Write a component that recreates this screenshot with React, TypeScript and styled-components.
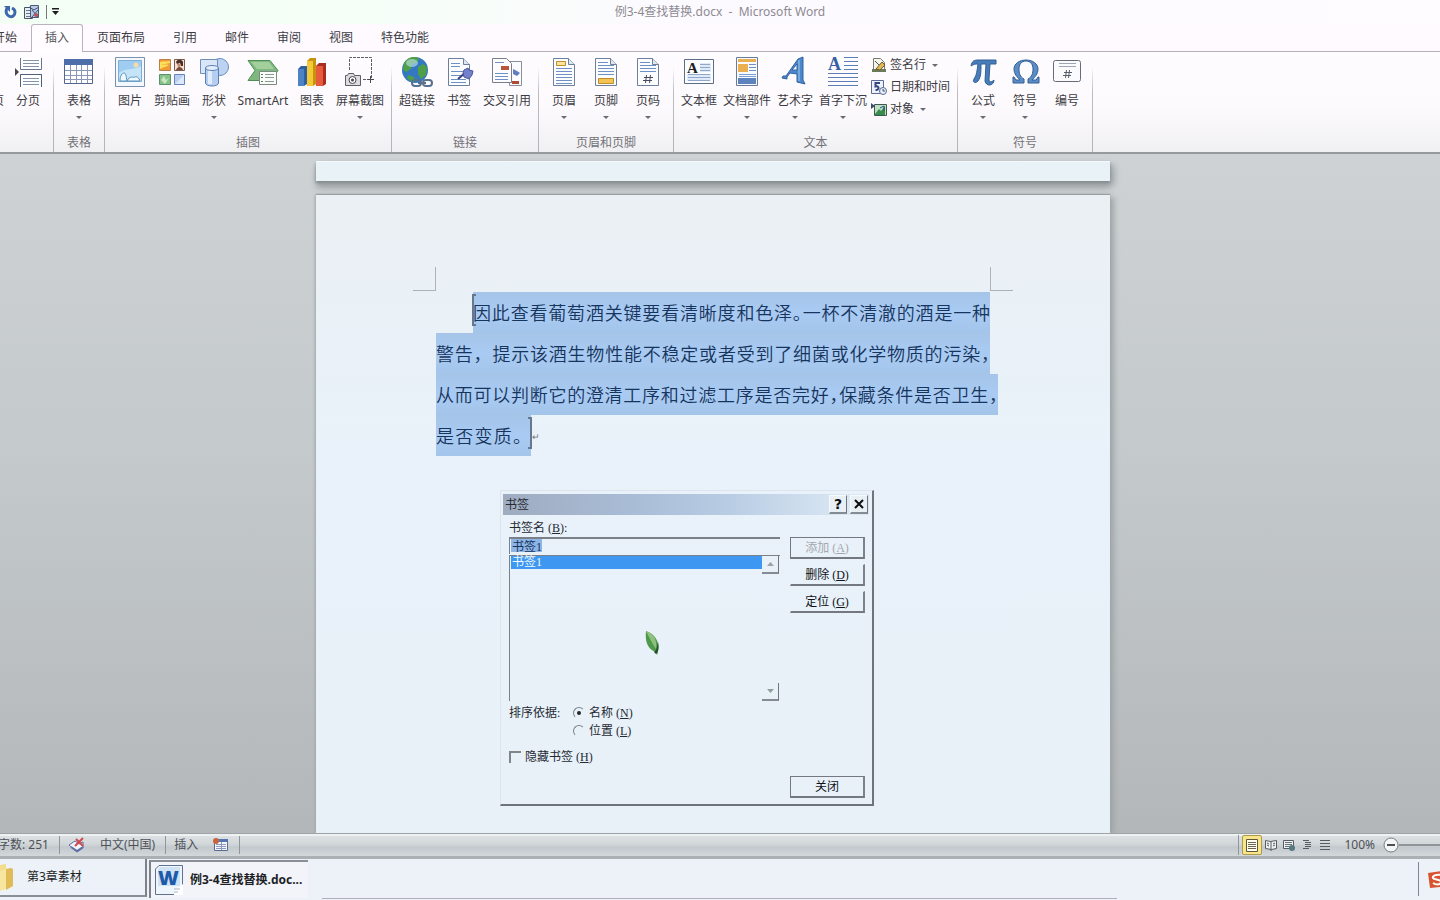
import React from "react";
import styled, { createGlobalStyle, css } from "styled-components";

const uiFont = `"Noto Sans", "Noto Sans CJK SC", sans-serif`;
const dialogFont = `"Liberation Serif", "Noto Sans CJK SC", serif`;

const GlobalStyle = createGlobalStyle`
  *, *::before, *::after { box-sizing: border-box; }
  body { margin: 0; background: #b4b8ba; }
  button, input { font: inherit; color: inherit; }
  button { border: 0; padding: 0; background: none; cursor: default; }
  svg { display: block; flex: none; }
`;

const Window = styled.div`
  display: flex;
  flex-direction: column;
  min-height: 100vh;
  overflow: hidden;
  font-family: ${uiFont};
  font-size: 12px;
  line-height: 16px;
  color: #3c3c44;
`;

/* ---------- title bar ---------- */

const TitleBar = styled.header`
  display: grid;
  grid-template-columns: 1fr auto 1fr;
  align-items: center;
  height: 24px;
  padding: 0 4px;
  background: linear-gradient(90deg, #f3fff5 0, #f4fff6 20%, #fdfaff 50%, #fefcff 100%);
`;

const QuickAccess = styled.div`
  display: flex;
  align-items: center;
  gap: 5px;
`;

const IconButton = styled.button`
  display: flex;
  align-items: center;
  justify-content: center;
`;

const QuickDivider = styled.span`
  width: 1px;
  height: 14px;
  background: #77777c;
`;

const Title = styled.h1`
  margin: 0;
  font-size: 12px;
  font-weight: 400;
  color: #8d8a92;
  white-space: pre;
`;

/* ---------- tabs ---------- */

const TabStrip = styled.nav`
  display: flex;
  height: 28px;
  margin-left: -21px;
  background: #fefaff;
  border-bottom: 1px solid #b5b0b8;
`;

const Tab = styled.button<{ $active?: boolean }>`
  height: 28px;
  padding: 0 13px 2px;
  border: 1px solid transparent;
  border-bottom: 0;
  border-radius: 3px 3px 0 0;
  white-space: nowrap;
  ${(p) =>
    p.$active &&
    css`
      border-color: #b9b3bb;
      background: #fffdff;
      color: #55555c;
    `}
`;

/* ---------- ribbon ---------- */

const Ribbon = styled.div`
  display: flex;
  height: 102px;
  margin-left: -39px;
  background: linear-gradient(#fffcff 0, #fdfafd 55%, #f0f0f2 100%);
  border-bottom: 2px solid #96999d;
`;

const Group = styled.section`
  display: flex;
  flex-direction: column;
  flex: none;
  padding: 4px 4px 0;
  border-right: 1px solid;
  border-image: linear-gradient(transparent 15%, #bdbcc1 40%, #b4b4b8) 1;
`;

const GroupItems = styled.div`
  display: flex;
  flex: 1;
`;

const GroupName = styled.h2`
  margin: 0;
  height: 17px;
  font-size: 12px;
  font-weight: 400;
  text-align: center;
  color: #737278;
`;

const BigButton = styled.button<{ $width: number }>`
  display: flex;
  flex-direction: column;
  align-items: center;
  width: ${(p) => p.$width}px;
  height: 70px;
  white-space: nowrap;
`;

const BigLabel = styled.span`
  margin-top: 5px;
`;

const Caret = styled.span`
  width: 0;
  height: 0;
  margin-top: 7px;
  border: 3px solid transparent;
  border-top-color: #6a6a70;
  border-bottom: 0;
`;

const SmallStack = styled.div`
  display: flex;
  flex-direction: column;
  width: 83px;
  margin-top: -2px;
`;

const SmallButton = styled.button`
  display: flex;
  align-items: center;
  gap: 3px;
  height: 22px;
  padding-left: 1px;
  white-space: nowrap;

  ${Caret} {
    margin: 0 0 0 3px;
  }
`;

/* ---------- document ---------- */

const Workspace = styled.main`
  display: flex;
  flex-direction: column;
  flex: 1;
  align-items: center;
  padding: 7px 14px 0 0;
  background: linear-gradient(#ced2d5, #c4c9cc 45%, #b3b7b9);
`;

const PreviousPage = styled.div`
  width: 794px;
  height: 20px;
  margin-bottom: 14px;
  background: #e9f2f6;
  border-top: 1px solid #f6fafb;
  box-shadow: 0 2px 3px #84898c, 0 7px 6px #a2a7aa, 5px 4px 6px #a7acaf;
`;

const Page = styled.article`
  flex: 1;
  width: 794px;
  padding: 72px 120px 20px;
  background: linear-gradient(#ebf0f4, #e9f2fa 40%, #e8f1f8);
  box-shadow: 0 -1px 1px #9a9fa2, 4px 2px 6px #a0a5a8, -1px 0 3px #a7acaf;
`;

const MarginMarks = styled.div`
  display: flex;
  justify-content: space-between;
  height: 24px;
  margin: 0 -23px;

  &::before,
  &::after {
    content: "";
    width: 23px;
    border-bottom: 1px solid #aeb2b7;
  }
  &::before { border-right: 1px solid #aeb2b7; }
  &::after { border-left: 1px solid #aeb2b7; }
`;

const Paragraph = styled.p`
  margin: 1px 0 0;
  font-family: "Noto Sans CJK SC", sans-serif;
  font-size: 18px;
  font-weight: 350;
  line-height: 41px;
  color: #16345c;
`;

const Line = styled.span<{ $indent?: number; $width: number }>`
  position: relative;
  display: block;
  width: ${(p) => p.$width}px;
  margin-left: ${(p) => p.$indent ?? 0}px;
  background: linear-gradient(#a5c4e8, #a9cbf3 50%, #a4c5ea);
  text-align: justify;
  text-align-last: justify;
  white-space: nowrap;
`;

const HalfMark = styled.span`
  font-feature-settings: "halt";
`;

const Bracket = styled.i<{ $side: "left" | "right" }>`
  position: absolute;
  top: 2px;
  ${(p) => p.$side}: -1px;
  width: 4px;
  height: 32px;
  border: 2px solid #66788f;
  border-${(p) => (p.$side === "left" ? "right" : "left")}: 0;
`;

const ReturnMark = styled.span`
  position: absolute;
  left: 100%;
  top: 2px;
  padding-left: 1px;
  font-family: "DejaVu Sans", sans-serif;
  font-size: 9px;
  color: #6d747c;
`;

/* ---------- bookmark dialog ---------- */

const Dialog = styled.section`
  position: relative;
  width: 374px;
  margin: 34px 0 0 64px;
  padding: 3px 3px 6px 2px;
  border-right: 2px solid #6f747c;
  border-bottom: 2px solid #6f747c;
  border-top: 1px solid #dde5ec;
  border-left: 1px solid #dde5ec;
  font-family: ${dialogFont};
  color: #262a33;
`;

const DialogTitle = styled.header`
  display: flex;
  align-items: center;
  gap: 3px;
  height: 21px;
  padding: 0 1px 0 2px;
  background: linear-gradient(90deg, #9facc0, #a9bcd6 35%, #b7cbe3 60%, #dbe8f4 95%);

  h2 {
    flex: 1;
    margin: 0;
    font-size: 12px;
    font-weight: 400;
  }
`;

const CaptionButton = styled.button`
  display: flex;
  align-items: center;
  justify-content: center;
  width: 18px;
  height: 19px;
  background: #e9f0f5;
  border: 1px solid #f8fbfd;
  border-right-color: #70757d;
  border-bottom: 2px solid #858b93;
  font-family: "DejaVu Sans", sans-serif;
  font-size: 14px;
  font-weight: 700;
  color: #0c0d10;
`;

const DialogBody = styled.form`
  display: grid;
  grid-template-columns: 271px 75px;
  justify-content: space-between;
  padding: 5px 4px 0 6px;
`;

const FieldLabel = styled.label`
  display: block;
  height: 17px;
`;

const Key = styled.span`
  padding-left: 3px;

  u { text-underline-offset: 1px; }
`;

const NameInput = styled.input`
  display: block;
  width: 271px;
  height: 17px;
  padding: 0 2px 2px;
  border: 0;
  border-top: 2px solid #7b8188;
  border-left: 1px solid #7b8188;
  outline: 0;
  border-radius: 0;
  background: linear-gradient(#8db5e6, #8db5e6) 1px 0 / 31px 13px no-repeat transparent;
  color: #17335c;
`;

const List = styled.div`
  display: flex;
  height: 146px;
  margin-top: 1px;
  border-top: 1px solid #7b8188;
  border-left: 1px solid #7b8188;
`;

const Options = styled.ul`
  flex: 1;
  margin: 0;
  padding: 0 0 0 1px;
  list-style: none;
`;

const Option = styled.li`
  height: 13px;
  padding-left: 1px;
  line-height: 13px;
  background: #3e97f0;
  color: #f2f9ff;
`;

const Scroller = styled.div`
  display: flex;
  flex-direction: column;
  justify-content: space-between;
  width: 18px;
`;

const ScrollButton = styled.button`
  display: flex;
  align-items: center;
  justify-content: center;
  height: 18px;
  width: 17px;
  background: #e9f1f8;
  border-right: 1px solid #70757d;
  border-bottom: 2px solid #858b93;
`;

const ButtonColumn = styled.div`
  display: flex;
  flex-direction: column;
  gap: 5px;
  padding-top: 17px;
`;

const PushButton = styled.button<{ $framed?: boolean }>`
  height: 22px;
  width: 75px;
  border: 1px solid ${(p) => (p.$framed ? "#747981" : "transparent")};
  border-right: 2px solid #7c828a;
  border-bottom: 2px solid #747981;
  color: #101218;

  &:disabled { color: #a3a8ae; }
`;

const SortRow = styled.fieldset`
  display: flex;
  margin: 4px 0 0;
  padding: 0;
  border: 0;
`;

const SortCaption = styled.span`
  width: 64px;
`;

const RadioList = styled.div`
  display: flex;
  flex-direction: column;
  gap: 2px;
`;

const Choice = styled.label`
  display: flex;
  align-items: center;
  gap: 4px;
`;

const Radio = styled.input`
  appearance: none;
  display: flex;
  align-items: center;
  justify-content: center;
  width: 12px;
  height: 12px;
  margin: 0;
  border: 1px solid;
  border-color: #7c8188 transparent transparent #7c8188;
  border-radius: 50%;

  &:checked::before {
    content: "";
    width: 4px;
    height: 4px;
    border-radius: 50%;
    background: #23262c;
  }
`;

const CheckBox = styled.input`
  appearance: none;
  width: 12px;
  height: 12px;
  margin: 0;
  border-top: 2px solid #80858c;
  border-left: 2px solid #80858c;
`;

const CheckRow = styled.div`
  padding-top: 10px;
`;

const CloseRow = styled.div`
  grid-column: 2;
  padding-top: 11px;
`;

const LeafCursor = styled.svg`
  position: absolute;
  left: 144px;
  top: 140px;
`;

/* ---------- status bar ---------- */

const StatusBar = styled.footer`
  display: flex;
  align-items: center;
  height: 26px;
  margin-left: -2px;
  border-top: 1px solid #9ea3a6;
  border-bottom: 3px solid #aab0b4;
  box-shadow: inset 0 2px 0 #eef1f2;
  background: linear-gradient(#dfe3e6, #d2d7da 45%, #c3c9cd 60%, #d3d8db);
  color: #4d5157;
  white-space: nowrap;
`;

const StatusItem = styled.button`
  display: flex;
  align-items: center;
  gap: 15px;
  height: 18px;
  padding: 0 10px 0 8px;
  border-right: 1px solid #8f9599;

  &:first-child { padding-left: 0; }
`;

const StatusRight = styled.div`
  display: flex;
  align-items: center;
  margin-left: auto;
  padding-left: 3px;
  border-left: 1px solid #8f9599;
`;

const ViewButton = styled.button<{ $on?: boolean }>`
  display: flex;
  align-items: center;
  justify-content: center;
  width: 18px;
  height: 20px;
  ${(p) =>
    p.$on &&
    css`
      width: 20px;
      border: 1px solid #b09a4a;
      border-radius: 2px;
      background: #f8e68c;
    `}
`;

const ZoomLabel = styled.button`
  padding: 0 8px 0 10px;
`;

const ZoomTrack = styled.span`
  width: 41px;
  height: 2px;
  background: #8e9498;
`;

/* ---------- taskbar ---------- */

const TaskBar = styled.nav`
  display: flex;
  height: 41px;
  background: #edf2f8;
  color: #1d1f25;
`;

const Task = styled.button<{ $active?: boolean }>`
  display: flex;
  align-items: center;
  text-align: left;
  white-space: nowrap;
  ${(p) =>
    p.$active
      ? css`
          width: 159px;
          height: 38px;
          margin: 1px 0 0 2px;
          padding-left: 3px;
          gap: 6px;
          border-top: 2px solid #8a8f97;
          border-left: 2px solid #7d828a;
          background: #f2f4fa;
          font-weight: 700;
        `
      : css`
          width: 147px;
          height: 38px;
          gap: 11px;
          border-right: 2px solid #7d828a;
          border-bottom: 2px solid #8a8f97;
        `}
`;

const TaskSpace = styled.div`
  flex: 1;
  margin: 0 301px 1px 14px;
  border-bottom: 1px solid #b1acbb;
`;

const Tray = styled.div`
  display: flex;
  align-items: center;
  width: 22px;
  height: 34px;
  margin-top: 3px;
  padding-left: 8px;
  border-left: 1px solid #82878f;
`;

/* ---------- icon drawings ---------- */

const Doc = ({ x = 5, children }: { x?: number; children?: React.ReactNode }) => (
  <g transform={`translate(${x} 1)`}>
    <path d="M.5 1.500h15l6 6v21h-21z" fill="#fcfdff" stroke="#6e7f9c" />
    <path d="M15.500 1.500v6h6" fill="#dde6f3" stroke="#6e7f9c" />
    {children}
  </g>
);

const lines = (x1: number, x2: number, ys: number[], color = "#6f90c5") =>
  ys.map((y) => <path key={y} d={`M${x1} ${y}.5H${x2}`} stroke={color} />);

const icons: Record<string, React.ReactNode> = {
  blank: <Doc />,
  pageBreak: (
    <>
      <path d="M8.500 2v11.500H29.500V2M8.500 31V18.500H29.500V31" fill="#fff" stroke="#67768d" />
      {lines(11, 27, [4, 7, 10, 22, 25, 28], "#8593aa")}
      <path d="M3 12l4 4-4 4z" fill="#47484f" />
      <path d="M8.500 31V18.500H29.500V31" fill="none" stroke="#4f6079" />
    </>
  ),
  table: (
    <>
      <path d="M1.500 3.500h28v24h-28z" fill="#fff" stroke="#53668f" />
      <path d="M1 3h29v6H1z" fill="#4d6ea9" />
      <path d="M2 14.500h27M2 19.500h27M2 23.500h27M7.500 9v18M13.500 9v18M18.500 9v18M24.500 9v18" stroke="#8b98b5" />
    </>
  ),
  picture: (
    <>
      <path d="M1.500 1.500h29v29h-29z" fill="#f2f8fd" stroke="#7c91ab" />
      <path d="M4.500 4.500h23v21h-23z" fill="#9fcdf1" stroke="#80add2" />
      <path d="M5 17c8-6 14-2 22-7v15H5z" fill="#c5e4f7" />
      <circle cx="22" cy="9" r="2.500" fill="#f4dcaa" />
      <path d="M6 25c0-5 2-8 4-8s2 3 3 8zM13 25c3-6 6-3 8-4s4 1 5 4z" fill="#eef8fd" stroke="#5b93bb" />
    </>
  ),
  clipArt: (
    <>
      <path d="M3.500 3.500h11v11h-11z" fill="#f39a35" stroke="#b8804a" />
      <path d="M4 6c4-1 6 0 10-1v2c-4 1-6 1-9 1 3 1 5 0 8 1-3 2-6 2-9 4z" fill="#fbe05c" />
      <path d="M18.500 3.500h10v11h-10z" fill="#f3e2d5" stroke="#7b5b4e" />
      <path d="M20 6c1-3 6-3 7 0v4h-2l-1-3-3 1z" fill="#4d2f28" />
      <path d="M21 8h4l-1 3h-2z" fill="#c98c6c" />
      <path d="M20 14c1-4 6-4 7 0z" fill="#7a4a3a" />
      <path d="M3.500 18.500h11v10h-11z" fill="#88c08a" stroke="#5a936a" />
      <path d="M5 24l3-4 2 4 3-2-4 6z" fill="#c7e7bd" />
      <path d="M18.500 18.500h10v10h-10z" fill="#b7cdf2" stroke="#6783bd" />
      <path d="M19 28l9-9v9z" fill="#dce8fb" />
    </>
  ),
  shapes: (
    <>
      <circle cx="22" cy="11" r="8.500" fill="#bcd4f1" stroke="#6c8fbd" />
      <path d="M2.500 3.500h17v14h-17z" fill="#d9e6f7" stroke="#6f8fb9" />
      <path d="M7.500 12v15c0 4 13 4 13 0V12z" fill="#b3cef0" stroke="#5c7fb2" />
      <path d="M10 13v15h4V13z" fill="#e1edfa" />
      <ellipse cx="14" cy="12" rx="6.500" ry="2.500" fill="#e3eefb" stroke="#5c7fb2" />
    </>
  ),
  smartArt: (
    <>
      <path d="M1 4.500h22l8 10-7 10H1l7-10z" fill="#7fb87e" stroke="#4e8f55" />
      <path d="M4 6h18l5 7H10z" fill="#a3cf9d" />
      <path d="M12.500 15.500h17v13h-17z" fill="#fbfdfb" stroke="#7b8b83" />
      {lines(18, 27, [18, 21, 25], "#8a9992")}
      {lines(14, 16, [18, 21, 25], "#5c7d65")}
    </>
  ),
  chart: (
    <>
      <path d="M2 13l3-3h6v18l-3 2H2z" fill="#2f5f9f" />
      <path d="M2 13h6v17H2z" fill="#4b83c4" />
      <path d="M11 5l3-3h6v26l-3 2h-6z" fill="#c8930f" />
      <path d="M11 5h6v25h-6z" fill="#f3ca35" />
      <path d="M20 10l3-3h7v21l-3 2h-7z" fill="#a92e20" />
      <path d="M20 10h7v20h-7z" fill="#e55b3c" />
    </>
  ),
  screenshot: (
    <>
      <path d="M5.500 14V1.500h22V22M19 23.500h6" fill="none" stroke="#5e5e64" strokeDasharray="3 1" />
      <path d="M1.500 19.500h2l1-2h5l1 2h6v10h-15z" fill="#dcdcdf" stroke="#5e5e64" />
      <circle cx="8.500" cy="24" r="3.500" fill="#fff" stroke="#47474d" />
      <circle cx="8.500" cy="24" r="1.500" fill="#47474d" />
      <path d="M23 23.500h7M26.500 20v7" stroke="#4a4a50" />
    </>
  ),
  link: (
    <>
      <circle cx="14" cy="14" r="13" fill="#3478c2" />
      <path d="M3 7c4-7 13-7 15-4l-3 4-4 1-1 5-5 3-3-2zM17 11l5-3 4 3-1 8-5 4-3-5zM7 19l6 2 1 5c-4 0-6-2-8-4z" fill="#4f9f48" />
      <ellipse cx="11" cy="7" rx="6" ry="4" fill="#c1e4f0" opacity=".6" />
      <g fill="none" stroke="#57718f" strokeWidth="2">
        <rect x="11" y="24" width="9" height="6" rx="3" />
        <rect x="22" y="24" width="9" height="6" rx="3" />
        <path d="M17 27h8" />
      </g>
    </>
  ),
  bookmark: (
    <Doc x={5}>
      {lines(3, 12, [6, 9])}
      {lines(3, 18, [14, 18, 22, 25])}
      <path d="M10 22l8-7" stroke="#39427c" strokeWidth="2" />
      <path d="M16 13l4-2 1 2 4 1-1 4-3 4-5-2-1-4z" fill="#7380cb" stroke="#4a559c" />
    </Doc>
  ),
  crossRef: (
    <>
      <path d="M18.500 5.500h12v24h-12z" fill="#fbfcfe" stroke="#8a8fa0" />
      <path d="M22 13l4 2 3 2-3 3-4-2z" fill="#637bc3" />
      <path d="M21 25h7v3h-7z" fill="#b14b33" />
      <path d="M1.500 2.500h14l5 5v19h-19z" fill="#fdfdff" stroke="#7a7d8c" />
      <path d="M10 10h8v4h-8z" fill="#b9573a" />
      {lines(4, 13, [6])}
      {lines(4, 17, [17, 20, 23])}
    </>
  ),
  header: (
    <Doc>
      <path d="M3.500 4.500h9v4h-9z" fill="#fbe3a0" stroke="#bd8d2c" />
      {lines(3, 19, [11, 14, 17, 20, 23, 26])}
    </Doc>
  ),
  footer: (
    <Doc>
      {lines(3, 13, [5])}
      {lines(3, 19, [8, 11, 14, 17])}
      <path d="M3.500 21.500h15v5h-15z" fill="#f4c356" stroke="#bd8d2c" />
    </Doc>
  ),
  pageNumber: (
    <Doc>
      {lines(3, 13, [5])}
      {lines(3, 19, [8, 11, 14])}
      <path d="M9.500 18l-1 8M13.500 18l-1 8M7 20.500h9M6 23.500h9" stroke="#454a5c" />
    </Doc>
  ),
  textBox: (
    <>
      <path d="M1.500 3.500h29v24h-29z" fill="#fcfdff" stroke="#5e6d87" />
      <path d="M17 7h11v9H17zM4 18h24v7H4z" fill="#dfeaf8" />
      <text x="4" y="17" fontFamily="Liberation Serif" fontWeight="700" fontSize="15" fill="#1c1e26">A</text>
      {lines(17, 27, [8, 11, 14], "#93a7ca")}
      {lines(5, 27, [18, 21, 24], "#93a7ca")}
    </>
  ),
  parts: (
    <>
      <path d="M5.500 1.500h21v28h-21z" fill="#f8fafd" stroke="#6a7b99" />
      <path d="M7 3h18v3H7zM7 8h10v8H7z" fill="#eab04f" />
      {lines(18, 25, [8, 11, 14])}
      {lines(8, 25, [18, 20], "#7ba0d4")}
      <path d="M7 22h18v6H7z" fill="#5c83bd" />
    </>
  ),
  wordArt: (
    <>
      <path d="M4 20h3L19 3l5-2v23l2 4-8-2v-8l-7-1-3 4v2l-5-1zM18 14V8l-5 6z" fill="#4a88cc" fillRule="evenodd" stroke="#31619f" />
      <path d="M20 4v21" fill="none" stroke="#a4c8ec" />
    </>
  ),
  dropCap: (
    <>
      <text x="1" y="14" fontFamily="Liberation Serif" fontWeight="700" fontSize="18" fill="#365fa5">A</text>
      {lines(17, 31, [1, 5, 9, 13], "#5d7fb6")}
      {lines(1, 31, [17, 21, 25, 29], "#5d7fb6")}
    </>
  ),
  equation: (
    <path
      d="M4 10c1-5 3-6 7-6h18v4h-6l-1 15c0 3 2 4 5 1 0 6-8 7-9 1l1-17h-5c0 8 0 13-3 17-3 3-6 1-4-2 3-4 3-9 4-15-3 0-4 0-7 2z"
      fill="#477cb9"
      stroke="#325f96"
    />
  ),
  omega: (
    <path
      d="M4 27v-6h1l2 3h4c-3-3-6-6-6-11C5 8 10 4 17 4s12 4 12 9c0 5-3 8-6 11h4l2-3h1v6H19v-4c4-2 5-6 5-10s-2-8-7-8-7 4-7 8 1 8 5 10v4z"
      fill="#5a8dc6"
      stroke="#325f96"
    />
  ),
  number: (
    <>
      <rect x="2.500" y="4.500" width="27" height="21" rx="2" fill="#fbfbfe" stroke="#686b78" />
      {lines(8, 25, [7, 10], "#9da5bb")}
      <path d="M15.500 14l-1 8M18.500 14l-1 8M13 16.500h8M12 19.500h8" stroke="#5a5d6b" />
    </>
  ),
};

const SmallIcon = ({ kind }: { kind: string }) => (
  <svg width="16" height="16" viewBox="0 0 16 16" aria-hidden="true">
    {kind === "sign" && (
      <>
        <path d="M2.500 1.500h7l4 4v9h-11z" fill="#f4f6ee" stroke="#767b72" />
        <path d="M1 12h14v3H1z" fill="#697b58" />
        <path d="M5 12l6-7 3 3-5 5z" fill="#e4b951" stroke="#6d5a34" />
        <path d="M4 4l4 4" stroke="#4a4f4d" />
      </>
    )}
    {kind === "date" && (
      <>
        <path d="M.5 1.500h12v13H.5z" fill="#edf1fa" stroke="#5d6b92" />
        <path d="M9 4H4.500v3.500c4-1 4 4 0 3.500" fill="none" stroke="#34467f" strokeWidth="2" />
        <circle cx="12" cy="12" r="3.500" fill="#e6eefb" stroke="#5d6b92" />
        <path d="M12 10v2h2" fill="none" stroke="#44506f" />
      </>
    )}
    {kind === "object" && (
      <>
        <path d="M3.500 3.500h12v11h-12z" fill="#bfe0c0" stroke="#3e5a50" />
        <path d="M0 2l4 3-4 3z" fill="#3e4a70" />
        <path d="M4 13l4-5 2 2 4-5v9H4z" fill="#3a8b4c" />
        <path d="M9 7l4-2v5" stroke="#274f8c" fill="none" />
      </>
    )}
  </svg>
);

type Item = { label: string; icon: string; menu?: boolean; width?: number };

const Big = ({ label, icon, menu, width = 42 }: Item) => (
  <BigButton type="button" $width={width}>
    <svg width="32" height="32" viewBox="0 0 32 32" aria-hidden="true">{icons[icon]}</svg>
    <BigLabel>{label}</BigLabel>
    {menu && <Caret />}
  </BigButton>
);

const groups: { name: string; items: Item[] }[] = [
  { name: "", items: [{ label: "空白页", icon: "blank" }, { label: "分页", icon: "pageBreak" }] },
  { name: "表格", items: [{ label: "表格", icon: "table", menu: true }] },
  {
    name: "插图",
    items: [
      { label: "图片", icon: "picture" },
      { label: "剪贴画", icon: "clipArt" },
      { label: "形状", icon: "shapes", menu: true },
      { label: "SmartArt", icon: "smartArt", width: 56 },
      { label: "图表", icon: "chart" },
      { label: "屏幕截图", icon: "screenshot", menu: true, width: 54 },
    ],
  },
  {
    name: "链接",
    items: [
      { label: "超链接", icon: "link" },
      { label: "书签", icon: "bookmark" },
      { label: "交叉引用", icon: "crossRef", width: 54 },
    ],
  },
  {
    name: "页眉和页脚",
    items: [
      { label: "页眉", icon: "header", menu: true },
      { label: "页脚", icon: "footer", menu: true },
      { label: "页码", icon: "pageNumber", menu: true },
    ],
  },
  {
    name: "文本",
    items: [
      { label: "文本框", icon: "textBox", menu: true },
      { label: "文档部件", icon: "parts", menu: true, width: 54 },
      { label: "艺术字", icon: "wordArt", menu: true },
      { label: "首字下沉", icon: "dropCap", menu: true, width: 54 },
    ],
  },
  {
    name: "符号",
    items: [
      { label: "公式", icon: "equation", menu: true },
      { label: "符号", icon: "omega", menu: true },
      { label: "编号", icon: "number" },
    ],
  },
];

const tabs = ["开始", "插入", "页面布局", "引用", "邮件", "审阅", "视图", "特色功能"];

const Shortcut = ({ k, after = "" }: { k: string; after?: string }) => (
  <Key>(<u>{k}</u>){after}</Key>
);

export default function App() {
  return (
    <Window>
      <GlobalStyle />
      <TitleBar>
        <QuickAccess>
          <IconButton type="button" aria-label="恢复">
            <svg width="14" height="14" viewBox="0 0 14 14">
              <path d="M3 3c-4 9 8 12 8 4 0-2-1-3-3-4" fill="none" stroke="#3f67ae" strokeWidth="3" />
              <path d="M0 1h6v6z" fill="#3f67ae" />
            </svg>
          </IconButton>
          <IconButton type="button" aria-label="粘贴">
            <svg width="18" height="16" viewBox="0 0 18 16">
              <path d="M1.500 3.500h8v11h-8z" fill="#e7edf4" stroke="#4a5260" />
              <path d="M3 6.500h5M3 9.500h5M3 12.500h5" stroke="#65758d" />
              <path d="M7.500 1.500h8v12h-8z" fill="#b9cae1" stroke="#4a5a78" />
              <path d="M6 3l5 3 5-3M9 6l6 7M15 6l-6 7" stroke="#3b557f" fill="none" />
              <circle cx="13" cy="11" r="2" fill="#b8535f" />
            </svg>
          </IconButton>
          <QuickDivider />
          <IconButton type="button" aria-label="自定义快速访问工具栏">
            <svg width="7" height="8" viewBox="0 0 7 8">
              <path d="M0 0h7v1.500H0zM0 3h7L3.500 7z" fill="#1d1d20" />
            </svg>
          </IconButton>
        </QuickAccess>
        <Title>例3-4查找替换.docx  -  Microsoft Word</Title>
      </TitleBar>

      <TabStrip>
        {tabs.map((t) => (
          <Tab key={t} type="button" $active={t === "插入"}>{t}</Tab>
        ))}
      </TabStrip>

      <Ribbon>
        {groups.map((g) => (
          <Group key={g.name}>
            <GroupItems>
              {g.items.map((i) => <Big key={i.label} {...i} />)}
              {g.name === "文本" && (
                <SmallStack>
                  <SmallButton type="button"><SmallIcon kind="sign" />签名行<Caret /></SmallButton>
                  <SmallButton type="button"><SmallIcon kind="date" />日期和时间</SmallButton>
                  <SmallButton type="button"><SmallIcon kind="object" />对象<Caret /></SmallButton>
                </SmallStack>
              )}
            </GroupItems>
            <GroupName>{g.name}</GroupName>
          </Group>
        ))}
      </Ribbon>

      <Workspace>
        <PreviousPage />
        <Page>
          <MarginMarks />
          <Paragraph>
            <Line $indent={37} $width={517}>
              <Bracket $side="left" />
              因此查看葡萄酒关键要看清晰度和色泽<HalfMark>。</HalfMark>一杯不清澈的酒是一种
            </Line>
            <Line $width={554}>
              警告，提示该酒生物性能不稳定或者受到了细菌或化学物质的污染<HalfMark>，</HalfMark>
            </Line>
            <Line $width={562}>
              从而可以判断它的澄清工序和过滤工序是否完好<HalfMark>，</HalfMark>保藏条件是否卫生<HalfMark>，</HalfMark>
            </Line>
            <Line $width={95}>
              是否变质。
              <Bracket $side="right" />
              <ReturnMark>↵</ReturnMark>
            </Line>
          </Paragraph>

          <Dialog role="dialog" aria-labelledby="dialog-title">
            <DialogTitle>
              <h2 id="dialog-title">书签</h2>
              <CaptionButton type="button" aria-label="帮助">?</CaptionButton>
              <CaptionButton type="button" aria-label="关闭">
                <svg width="10" height="10" viewBox="0 0 10 10">
                  <path d="M1 1l8 8M9 1L1 9" stroke="#0c0d10" strokeWidth="2" />
                </svg>
              </CaptionButton>
            </DialogTitle>
            <DialogBody onSubmit={(e) => e.preventDefault()}>
              <div>
                <FieldLabel htmlFor="bookmark-name">书签名<Shortcut k="B" after=":" /></FieldLabel>
                <NameInput id="bookmark-name" defaultValue="书签1" />
                <List>
                  <Options role="listbox" aria-label="书签">
                    <Option role="option" aria-selected="true">书签1</Option>
                  </Options>
                  <Scroller>
                    <ScrollButton type="button" aria-label="向上">
                      <svg width="7" height="4" viewBox="0 0 7 4"><path d="M0 4h7L3.500 0z" fill="#9ba3a8" /></svg>
                    </ScrollButton>
                    <ScrollButton type="button" aria-label="向下">
                      <svg width="7" height="4" viewBox="0 0 7 4"><path d="M0 0h7L3.500 4z" fill="#8fa09c" /></svg>
                    </ScrollButton>
                  </Scroller>
                </List>
                <SortRow>
                  <SortCaption>排序依据:</SortCaption>
                  <RadioList>
                    <Choice><Radio type="radio" name="sort" defaultChecked /><span>名称<Shortcut k="N" /></span></Choice>
                    <Choice><Radio type="radio" name="sort" /><span>位置<Shortcut k="L" /></span></Choice>
                  </RadioList>
                </SortRow>
                <CheckRow>
                  <Choice><CheckBox type="checkbox" /><span>隐藏书签<Shortcut k="H" /></span></Choice>
                </CheckRow>
              </div>
              <ButtonColumn>
                <PushButton type="button" $framed disabled>添加<Shortcut k="A" /></PushButton>
                <PushButton type="button">删除<Shortcut k="D" /></PushButton>
                <PushButton type="button">定位<Shortcut k="G" /></PushButton>
              </ButtonColumn>
              <CloseRow>
                <PushButton type="button" $framed>关闭</PushButton>
              </CloseRow>
            </DialogBody>
            <LeafCursor width="15" height="24" viewBox="0 0 15 24" aria-hidden="true">
              <path d="M1 0c8 3 14 9 12 21l-1 3-2-3C2 17 0 10 1 0z" fill="#4f9a4a" />
              <path d="M1 0c8 3 11 8 10 18C7 12 4 6 1 0z" fill="#8fc27f" />
              <path d="M11 23c3-3 3-8 2-12-1 5-1 8-4 10z" fill="#234f2c" />
            </LeafCursor>
          </Dialog>
        </Page>
      </Workspace>

      <StatusBar>
        <StatusItem type="button">字数: 251</StatusItem>
        <StatusItem type="button">
          <svg width="17" height="16" viewBox="0 0 17 16" aria-hidden="true">
            <path d="M1 8l6-4 4 3 4-2v6l-6 4z" fill="#f2f4fa" stroke="#5f6fa5" />
            <path d="M3 10l6 4 6-4" fill="none" stroke="#5f6fa5" strokeWidth="2" />
            <path d="M8 2l7 7M15 1L7 9" stroke="#cf4a50" strokeWidth="2" />
          </svg>
          中文(中国)
        </StatusItem>
        <StatusItem type="button">
          插入
          <svg width="16" height="14" viewBox="0 0 16 14" aria-hidden="true">
            <path d="M1.500 1.500h13v11h-13z" fill="#f5f7fb" stroke="#5b6b93" />
            <path d="M6 1h9v3H6z" fill="#5674ad" />
            <path d="M3 6.500h10M3 8.500h10M3 10.500h10M8.500 4v8" stroke="#8c9abb" />
            <circle cx="3" cy="3" r="3" fill="#c8643c" />
          </svg>
        </StatusItem>
        <StatusRight>
          <ViewButton type="button" $on aria-label="页面视图">
            <svg width="12" height="13" viewBox="0 0 12 13">
              <path d="M.5.5h11v12H.5z" fill="#fffdf0" stroke="#5e5637" />
              {lines(2, 10, [3, 5, 7, 9], "#6b6650")}
            </svg>
          </ViewButton>
          <ViewButton type="button" aria-label="阅读版式">
            <svg width="12" height="12" viewBox="0 0 12 12">
              <path d="M.5 1.500l5 1 6-1v8l-5 1-6-1zM6 2v10" fill="#eef1f3" stroke="#565c61" />
              <path d="M2 4l2 1M2 6l2 1M8 5l2-1M8 7l2-1" stroke="#565c61" />
            </svg>
          </ViewButton>
          <ViewButton type="button" aria-label="网页视图">
            <svg width="13" height="13" viewBox="0 0 13 13">
              <path d="M.5 1.500h10v8H.5z" fill="#eef1f3" stroke="#565c61" />
              {lines(2, 9, [3, 5, 7], "#6b7176")}
              <circle cx="9" cy="9" r="3" fill="#557a80" />
            </svg>
          </ViewButton>
          <ViewButton type="button" aria-label="大纲视图">
            <svg width="12" height="12" viewBox="0 0 12 12">
              {lines(2, 8, [1, 9], "#565c61")}
              {lines(4, 10, [3, 5, 7], "#565c61")}
            </svg>
          </ViewButton>
          <ViewButton type="button" aria-label="草稿">
            <svg width="12" height="12" viewBox="0 0 12 12">{lines(1, 11, [1, 4, 7, 10], "#565c61")}</svg>
          </ViewButton>
          <ZoomLabel type="button">100%</ZoomLabel>
          <IconButton type="button" aria-label="缩小">
            <svg width="16" height="16" viewBox="0 0 16 16">
              <circle cx="8" cy="8" r="7" fill="#f3f5f6" stroke="#777d81" />
              <path d="M4 8h8" stroke="#4b5054" strokeWidth="2" />
            </svg>
          </IconButton>
          <ZoomTrack />
        </StatusRight>
      </StatusBar>

      <TaskBar>
        <Task type="button">
          <svg width="16" height="32" viewBox="0 0 16 32" aria-hidden="true">
            <path d="M0 4l6-1v22l-6 4z" fill="#f3dc8a" />
            <path d="M6 8l5-1 2 1v17l-7 4z" fill="#e0bb58" />
            <path d="M0 10l6-2v20l-6 2z" fill="#f7e6a0" />
          </svg>
          第3章素材
        </Task>
        <Task type="button" $active>
          <svg width="30" height="32" viewBox="0 0 30 32" aria-hidden="true">
            <path d="M5 1.500h23.500v29H1.500V5z" fill="#eef5fc" stroke="#5f7391" />
            <path d="M4 5l2-2h20v19H4z" fill="#cfe3f5" />
            <text x="4" y="21" fontFamily="Open Sans" fontWeight="800" fontSize="20" fill="#1d5ba8">W</text>
            <path d="M20 27l9-7v11h-9z" fill="#fff" />
            <path d="M20 25h6M20 28h4" stroke="#a7b5c8" />
          </svg>
          例3-4查找替换.doc...
        </Task>
        <TaskSpace />
        <Tray>
          <svg width="14" height="18" viewBox="0 0 14 18" aria-hidden="true">
            <path d="M1 3l13-2v16l-11 1z" fill="#d8532f" />
            <path d="M14 5c-5-1-9 1-8 3s8 1 8 4-5 3-8 1" fill="none" stroke="#fff" strokeWidth="2" />
          </svg>
        </Tray>
      </TaskBar>
    </Window>
  );
}
